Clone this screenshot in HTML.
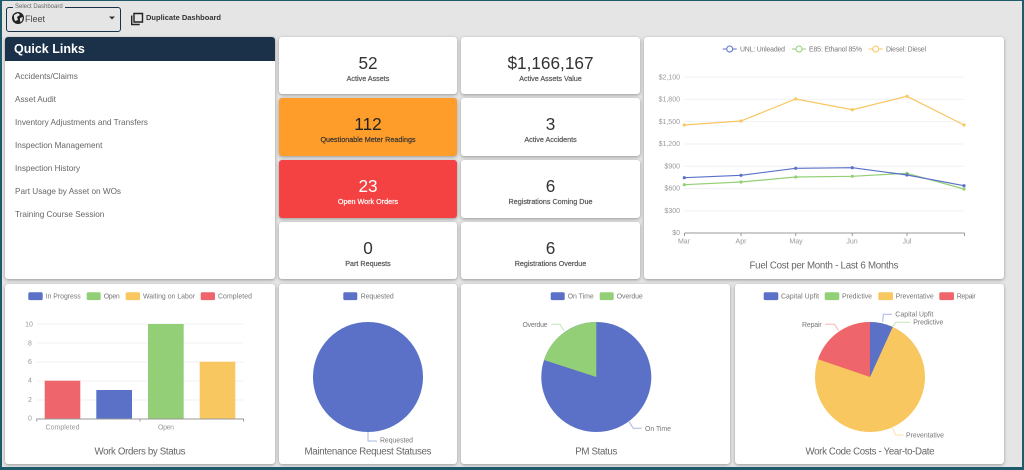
<!DOCTYPE html>
<html><head><meta charset="utf-8"><title>Fleet Dashboard</title>
<style>
html,body{margin:0;padding:0}
body{width:1024px;height:470px;overflow:hidden;position:relative;background:#e5e5e5;font-family:"Liberation Sans",sans-serif;color:#333}
#wrap{position:absolute;left:0;top:0;width:1024px;height:470px;filter:blur(.35px)}
#frame{position:absolute;left:0;top:0;width:1020px;height:466px;border:2px solid #1f5a6a;border-top-width:1px;border-bottom-width:3px;z-index:5;pointer-events:none}
.card{position:absolute;background:#fff;border-radius:3px;box-shadow:0 1px 3px rgba(0,0,0,.35);overflow:hidden}
.stat{text-align:center}
.num{position:absolute;left:0;right:0;top:15.4px;font-size:17.2px;line-height:22px;color:#333}
.lab{position:absolute;left:0;right:0;top:36px;font-size:7.2px;line-height:12px;color:#555;-webkit-text-stroke:.2px #555}
.orange{background:#ff9d2a}.orange .num{color:#222}.orange .lab{color:#333;-webkit-text-stroke:.2px #333}
.red{background:#f44141}.red .num,.red .lab{color:#fff}.red .lab{-webkit-text-stroke:.2px #fff}
#ql h2{margin:0;background:#1b3049;color:#fff;font-size:12.5px;line-height:24px;height:24px;padding-left:9px;font-weight:bold}
#ql a{position:absolute;left:10px;font-size:8.2px;line-height:12px;color:#666;text-decoration:none;white-space:nowrap}
#sel{position:absolute;left:6px;top:7px;width:113px;height:23px;border:1px solid #1b3049;border-radius:3px}
#sel span{position:absolute;left:6px;top:-4px;background:#e5e5e5;padding:0 2px;font-size:6px;line-height:7px;color:#666}
#sel b{position:absolute;left:18px;top:5px;font-size:9px;font-weight:normal;line-height:12px;color:#444}
#dup{position:absolute;left:146px;top:12px;font-size:7.5px;line-height:12px;font-weight:bold;color:#333;white-space:nowrap}
svg{position:absolute;left:0;top:0}
svg text{font-family:"Liberation Sans",sans-serif;font-size:6.9px;fill:#777}
svg .t{font-size:9.7px;fill:#666;text-anchor:middle}
svg .a{font-size:7px;fill:#999}
svg .g{stroke:#f0f1f6;stroke-width:1;fill:none}
svg .l{fill:none;stroke-width:1.2}
</style></head><body>
<div id="wrap">
<div id="frame"></div>

<div id="sel"><span>Select Dashboard</span><b>Fleet</b></div>
<div id="dup">Duplicate Dashboard</div>

<div class="card" id="ql" style="left:5px;top:37px;width:270px;height:242px">
<h2>Quick Links</h2>
<a style="top:34px">Accidents/Claims</a>
<a style="top:57px">Asset Audit</a>
<a style="top:80px">Inventory Adjustments and Transfers</a>
<a style="top:103px">Inspection Management</a>
<a style="top:126px">Inspection History</a>
<a style="top:149px">Part Usage by Asset on WOs</a>
<a style="top:172px">Training Course Session</a>
</div>

<div class="card stat" style="left:279px;top:37px;width:178px;height:57px"><div class="num">52</div><div class="lab">Active Assets</div></div>
<div class="card stat" style="left:461px;top:37px;width:179px;height:57px"><div class="num">$1,166,167</div><div class="lab">Active Assets Value</div></div>
<div class="card stat orange" style="left:279px;top:98px;width:178px;height:58px"><div class="num">112</div><div class="lab">Questionable Meter Readings</div></div>
<div class="card stat" style="left:461px;top:98px;width:179px;height:58px"><div class="num">3</div><div class="lab">Active Accidents</div></div>
<div class="card stat red" style="left:279px;top:160px;width:178px;height:58px"><div class="num">23</div><div class="lab">Open Work Orders</div></div>
<div class="card stat" style="left:461px;top:160px;width:179px;height:58px"><div class="num">6</div><div class="lab">Registrations Coming Due</div></div>
<div class="card stat" style="left:279px;top:222px;width:178px;height:57px"><div class="num">0</div><div class="lab">Part Requests</div></div>
<div class="card stat" style="left:461px;top:222px;width:179px;height:57px"><div class="num">6</div><div class="lab">Registrations Overdue</div></div>

<div class="card" style="left:644px;top:37px;width:360px;height:242px"></div>
<div class="card" style="left:5px;top:284px;width:270px;height:180px"></div>
<div class="card" style="left:279px;top:284px;width:178px;height:180px"></div>
<div class="card" style="left:461px;top:284px;width:269px;height:180px"></div>
<div class="card" style="left:735px;top:284px;width:269px;height:180px"></div>

<svg width="1024" height="470" viewBox="0 0 1024 470">
<!-- globe -->
<circle cx="18" cy="18" r="6" fill="#222"/>
<path d="M14 15l4-2 2 2-3 2 1 3-3 1-1-3zM20 18l3-1-1 4-2 1z" fill="#e5e5e5"/>
<path d="M109 16.5h6l-3 3z" fill="#333"/>
<!-- copy icon -->
<path d="M134 13.5h8.5v8.5h-8.5z" fill="none" stroke="#222" stroke-width="1.4"/>
<path d="M131.7 15.5v9h8" fill="none" stroke="#222" stroke-width="1.4"/>

<!-- line chart -->
<g class="g"><path d="M684 77H964M684 99.3H964M684 121.6H964M684 144H964M684 166.3H964M684 188.6H964M684 211H964"/></g>
<path d="M684.5 233H964.5M684.5 233v3M741 233v3M795.7 233v3M852.3 233v3M907 233v3M964.5 233v3" stroke="#999" fill="none"/>
<g text-anchor="end">
<text class="a" x="680" y="79.5">$2,100</text><text class="a" x="680" y="101.5">$1,800</text><text class="a" x="680" y="124">$1,500</text><text class="a" x="680" y="146">$1,200</text><text class="a" x="680" y="168.5">$900</text><text class="a" x="680" y="190.5">$600</text><text class="a" x="680" y="213">$300</text><text class="a" x="680" y="235">$0</text>
</g>
<g text-anchor="middle">
<text class="a" x="684" y="243.5">Mar</text><text class="a" x="741" y="243.5">Apr</text><text class="a" x="796" y="243.5">May</text><text class="a" x="852" y="243.5">Jun</text><text class="a" x="907" y="243.5">Jul</text>
</g>
<polyline class="l" stroke="#f8c75f" points="684.3,125 741,121 795.7,99 852.3,109.7 907,96.3 964,125"/>
<polyline class="l" stroke="#93cf76" points="684.3,184.7 741,182 795.7,177 852.3,176.3 907,173.3 964,189"/>
<polyline class="l" stroke="#5a71c7" points="684.3,177.7 741,175.3 795.7,168.3 852.3,167.7 907,175 964,185.7"/>
<g fill="#f8c75f"><circle cx="684.3" cy="125" r="1.6"/><circle cx="741" cy="121" r="1.6"/><circle cx="795.7" cy="99" r="1.6"/><circle cx="852.3" cy="109.7" r="1.6"/><circle cx="907" cy="96.3" r="1.6"/><circle cx="964" cy="125" r="1.6"/></g>
<g fill="#93cf76"><circle cx="684.3" cy="184.7" r="1.6"/><circle cx="741" cy="182" r="1.6"/><circle cx="795.7" cy="177" r="1.6"/><circle cx="852.3" cy="176.3" r="1.6"/><circle cx="907" cy="173.3" r="1.6"/><circle cx="964" cy="189" r="1.6"/></g>
<g fill="#5a71c7"><circle cx="684.3" cy="177.7" r="1.6"/><circle cx="741" cy="175.3" r="1.6"/><circle cx="795.7" cy="168.3" r="1.6"/><circle cx="852.3" cy="167.7" r="1.6"/><circle cx="907" cy="175" r="1.6"/><circle cx="964" cy="185.7" r="1.6"/></g>
<path d="M722.7 49H736.7" stroke="#5a71c7"/><circle cx="729.7" cy="49" r="3" fill="#fff" stroke="#5a71c7"/>
<text x="740" y="51.5" textLength="45">UNL: Unleaded</text>
<path d="M792 49H806" stroke="#93cf76"/><circle cx="799" cy="49" r="3" fill="#fff" stroke="#93cf76"/>
<text x="809" y="51.5" textLength="53">E85: Ethanol 85%</text>
<path d="M868.7 49H882.7" stroke="#f8c75f"/><circle cx="875.7" cy="49" r="3" fill="#fff" stroke="#f8c75f"/>
<text x="886" y="51.5" textLength="40">Diesel: Diesel</text>
<text class="t" x="824" y="268.5" textLength="149">Fuel Cost per Month - Last 6 Months</text>

<!-- bar chart -->
<rect x="28.3" y="292.3" width="14.4" height="7.8" rx="1.5" fill="#5a71c7"/><text x="45.7" y="298.7" textLength="35">In Progress</text>
<rect x="86.7" y="292.3" width="14" height="7.8" rx="1.5" fill="#93cf76"/><text x="103.7" y="298.7" textLength="16">Open</text>
<rect x="125.7" y="292.3" width="14.3" height="7.8" rx="1.5" fill="#f8c75f"/><text x="143" y="298.7" textLength="52">Waiting on Labor</text>
<rect x="200.7" y="292.3" width="14.3" height="7.8" rx="1.5" fill="#ee656b"/><text x="218" y="298.7" textLength="34">Completed</text>
<path class="g" d="M37 324H243M37 343H243M37 362H243M37 381H243M37 400H243"/>
<g><text class="a" x="29" y="326.5" text-anchor="middle">10</text><text class="a" x="30" y="345.3" text-anchor="middle">8</text><text class="a" x="30" y="364" text-anchor="middle">6</text><text class="a" x="30" y="382.7" text-anchor="middle">4</text><text class="a" x="30" y="402" text-anchor="middle">2</text><text class="a" x="30" y="420.7" text-anchor="middle">0</text></g>
<rect x="44.7" y="380.7" width="35.6" height="38" fill="#ee656b"/>
<rect x="96.3" y="390" width="35.7" height="28.7" fill="#5a71c7"/>
<rect x="148" y="324" width="35.7" height="94.7" fill="#93cf76"/>
<rect x="199.7" y="361.7" width="35.6" height="57" fill="#f8c75f"/>
<path d="M36.7 421.5v-2.5H243.5v2.5M140 419v2.5" stroke="#999" fill="none"/>
<text class="a" x="62.5" y="429.5" text-anchor="middle" textLength="34">Completed</text>
<text class="a" x="166" y="429.5" text-anchor="middle" textLength="16">Open</text>
<text class="t" x="140" y="454.5" textLength="91">Work Orders by Status</text>

<!-- maintenance pie -->
<rect x="343.3" y="292.3" width="14" height="7.8" rx="1.5" fill="#5a71c7"/><text x="360.7" y="298.7" textLength="33">Requested</text>
<circle cx="368" cy="377" r="55" fill="#5a71c7"/>
<path d="M368 432v9h9" stroke="#aab6e3" fill="none"/>
<text x="380" y="442.3" textLength="33">Requested</text>
<text class="t" x="368" y="454.5" textLength="127">Maintenance Request Statuses</text>

<!-- PM pie -->
<rect x="550.7" y="292.3" width="14" height="7.8" rx="1.5" fill="#5a71c7"/><text x="567.7" y="298.7" textLength="26">On Time</text>
<rect x="599.7" y="292.3" width="14" height="7.8" rx="1.5" fill="#93cf76"/><text x="616.7" y="298.7" textLength="26">Overdue</text>
<circle cx="596.3" cy="377" r="55" fill="#5a71c7"/>
<path d="M596.3 377L544 360A55 55 0 0 1 596.3 322Z" fill="#93cf76"/>
<path d="M564 330.7L560 324.3H551.3" stroke="#c5e5b5" fill="none"/>
<path d="M629 421.7L633.3 428.3H641.7" stroke="#aab6e3" fill="none"/>
<text x="522.5" y="327" textLength="25">Overdue</text>
<text x="645" y="431" textLength="26">On Time</text>
<text class="t" x="596.3" y="454.5" textLength="42">PM Status</text>

<!-- work code pie -->
<rect x="763.7" y="292.3" width="14.6" height="7.8" rx="1.5" fill="#5a71c7"/><text x="781" y="298.7" textLength="38">Capital Upfit</text>
<rect x="824.7" y="292.3" width="14.6" height="7.8" rx="1.5" fill="#93cf76"/><text x="842" y="298.7" textLength="30">Predictive</text>
<rect x="878.3" y="292.3" width="14.7" height="7.8" rx="1.5" fill="#f8c75f"/><text x="895.7" y="298.7" textLength="38">Preventative</text>
<rect x="939.3" y="292.3" width="14.7" height="7.8" rx="1.5" fill="#ee656b"/><text x="956.7" y="298.7" textLength="19">Repair</text>
<circle cx="870" cy="377" r="55" fill="#f8c75f"/>
<path d="M870 377L892.7 327A55 55 0 0 0 870 322Z" fill="#5a71c7"/>
<path d="M870 377L818 359.3A55 55 0 0 1 870 322Z" fill="#ee656b"/>
<path d="M882.7 321.7L883.3 314.3H892" stroke="#aab6e3" fill="none"/>
<path d="M892.5 327L895.7 322.3H910" stroke="#c5e5b5" fill="none"/>
<path d="M838.7 330.7L834.3 324.3H825" stroke="#f6b5b8" fill="none"/>
<path d="M892.3 428L895.7 435H903.3" stroke="#fbe0a8" fill="none"/>
<text x="895.3" y="316.5" textLength="38">Capital Upfit</text>
<text x="913.3" y="324.7" textLength="30">Predictive</text>
<text x="802" y="327" textLength="19.7">Repair</text>
<text x="906" y="437.7" textLength="38">Preventative</text>
<text class="t" x="870" y="454.5" textLength="129">Work Code Costs - Year-to-Date</text>
</svg>
</div>
</body></html>
